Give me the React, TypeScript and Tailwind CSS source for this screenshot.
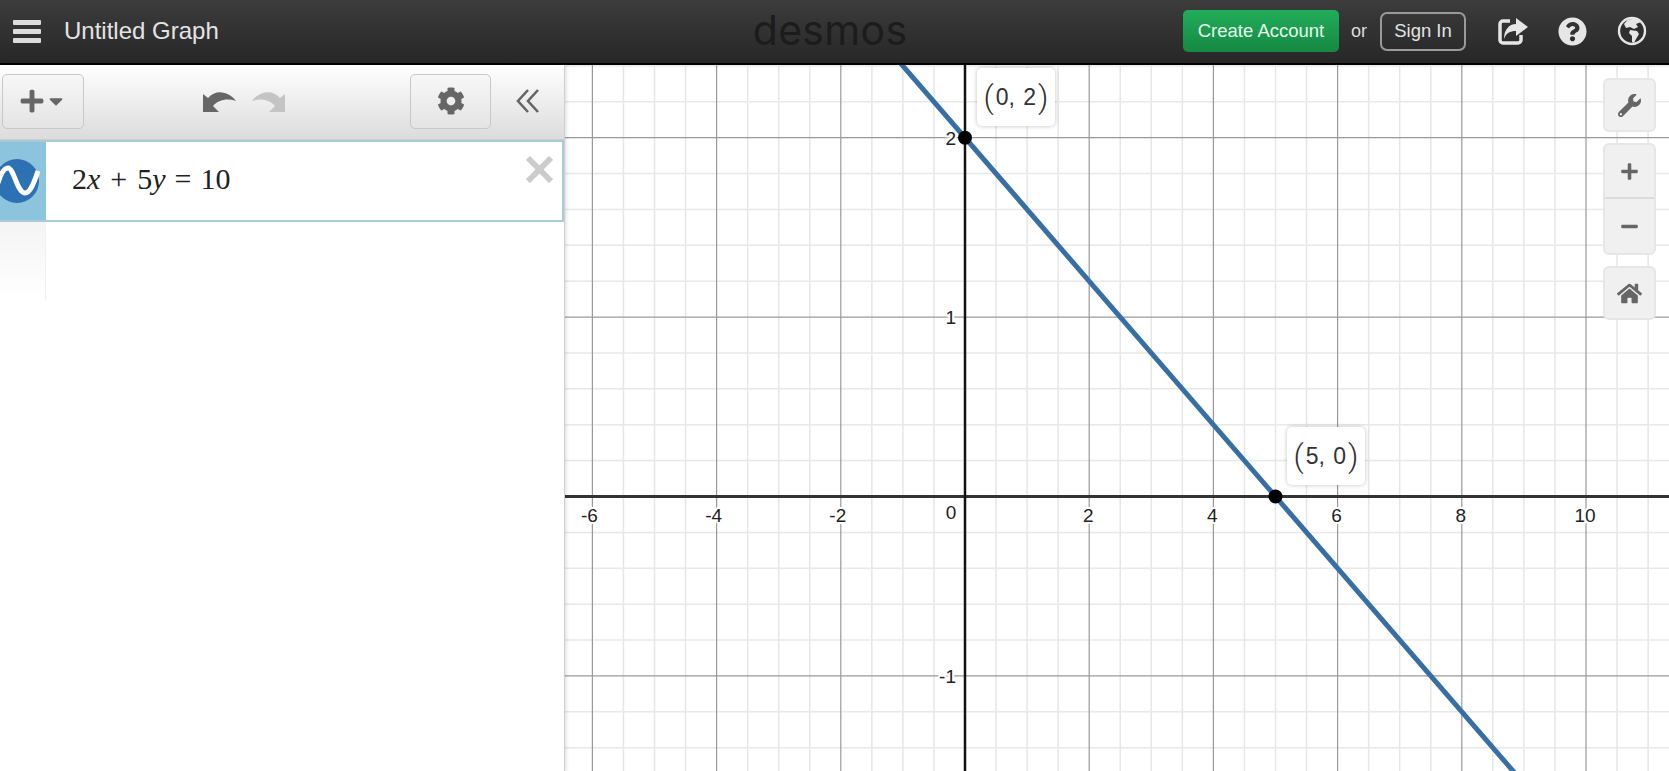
import { FaCaretDown, FaCog, FaHome, FaMinus, FaPlus, FaQuestionCircle, FaWrench } from 'react-icons/fa';

const sans = "font-['Liberation_Sans',Arial,sans-serif]";

// page coordinates of the graph origin and the size of one unit
const originX = 965;
const originY = 496.5;
const unitX = 62.1;
const unitY = 179.4;

const range = (from: number, to: number) => Array.from({ length: to - from + 1 }, (_, i) => from + i);

const toX = (v: number) => originX + v * unitX;
const toY = (v: number) => originY - v * unitY;

const xLabels = [-6, -4, -2, 2, 4, 6, 8, 10];

function Graph() {
    return (
        <svg className="absolute inset-0 h-full w-full" viewBox="565 65 1104 706" preserveAspectRatio="xMinYMin slice">
            {/* minor grid */}
            {range(-13, 25).filter(i => i % 4 !== 0).map(i => (
                <line key={i} x1={toX(i * 0.5)} x2={toX(i * 0.5)} y1={65} y2={771} stroke="#e6e6e6" strokeWidth={1.5} />
            ))}
            {range(-8, 12).filter(i => i % 5 !== 0).map(i => (
                <line key={i} x1={565} x2={1669} y1={toY(i * 0.2)} y2={toY(i * 0.2)} stroke="#e8e8e8" strokeWidth={1.5} />
            ))}
            {/* major grid */}
            {range(-3, 6).filter(i => i !== 0).map(i => (
                <line key={i} x1={toX(i * 2)} x2={toX(i * 2)} y1={65} y2={771} stroke="#999" strokeWidth={1.2} />
            ))}
            {[-1, 1, 2].map(i => (
                <line key={i} x1={565} x2={1669} y1={toY(i)} y2={toY(i)} stroke="#999" strokeWidth={1.2} />
            ))}
            {/* axes */}
            <line x1={565} x2={1669} y1={originY} y2={originY} stroke="#333" strokeWidth={3} />
            <line x1={originX} x2={originX} y1={65} y2={771} stroke="#111" strokeWidth={2.5} />
            {/* tick labels */}
            <g fontFamily="'Liberation Sans', Arial, sans-serif" fontSize={19} fill="#222" stroke="#fff" strokeWidth={4} paintOrder="stroke" strokeLinejoin="round">
                {xLabels.map(v => (
                    <text key={v} x={toX(v) - (v < 0 ? 3 : 1)} y={522} textAnchor="middle">{v}</text>
                ))}
                <text x={951} y={519} textAnchor="middle">0</text>
                <text x={956} y={145} textAnchor="end">2</text>
                <text x={956} y={324} textAnchor="end">1</text>
                <text x={956} y={683} textAnchor="end">-1</text>
            </g>
            {/* 2x + 5y = 10 */}
            <line x1={toX(-1.925)} y1={toY(2.77)} x2={toX(9)} y2={toY(-1.6)} stroke="#376fa5" strokeWidth={5} />
            <circle cx={toX(0)} cy={toY(2)} r={7} fill="#000" />
            <circle cx={toX(5)} cy={toY(0)} r={7} fill="#000" />
        </svg>
    );
}

function PointLabel({ text, className }: { text: string; className: string }) {
    return (
        <div className={`absolute flex h-[58px] w-[78px] items-center justify-center rounded-[5px] bg-white text-[#333] shadow-[0_0_4px_rgba(0,0,0,0.25)] ${className}`}>
            <span className="font-['Roboto',sans-serif] text-[32px] font-light leading-none">(</span>
            <span className={`mx-[2px] text-[23px] leading-none [word-spacing:2px] ${sans}`}>{text}</span>
            <span className="font-['Roboto',sans-serif] text-[32px] font-light leading-none">)</span>
        </div>
    );
}

function ToolButton({ children, className = '' }: { children: React.ReactNode; className?: string }) {
    return <div className={`flex items-center justify-center text-[#666] ${className}`}>{children}</div>;
}

function ShareIcon() {
    return (
        <svg width="32" height="30" viewBox="0 0 32 30" className="text-[#e6e6e6]">
            <path d="M13 5 H6 a3 3 0 0 0 -3 3 V24 a3 3 0 0 0 3 3 H21 a3 3 0 0 0 3 -3 V19" fill="none" stroke="currentColor" strokeWidth="3.5" />
            <path d="M19 2 L31 11 L19 20 V15 C13 15 9 17 7 23 C7 14 12 8 19 8 Z" fill="currentColor" />
        </svg>
    );
}

function Globe() {
    return (
        <svg width="30" height="30" viewBox="0 0 30 30">
            <circle cx="15" cy="15" r="13" fill="#2f2f2f" stroke="#e6e6e6" strokeWidth="2.4" />
            <path d="M11 3.5 L20 2.5 L24 6 L19 8 L21 11 L17 13 L13 11 L9 12 L7 8 Z" fill="#e6e6e6" />
            <path d="M13 14 L20 15 L22 18 L19 23 L17 27 L15 26 L15 20 L12 17 Z" fill="#e6e6e6" />
        </svg>
    );
}

function UndoIcon({ className }: { className: string }) {
    return (
        <svg width="34" height="23" viewBox="0 0 34 23" className={className}>
            <path d="M1 4 L1 22 H17 L11 16 C16 10 25 8 34 11 C28 2 14 -2 6 8 Z" fill="currentColor" />
        </svg>
    );
}

export default function App() {
    return (
        <div className={`flex h-screen w-full flex-col overflow-hidden bg-white ${sans}`}>
            {/* Header */}
            <header className="flex h-[65px] shrink-0 items-center border-b-2 border-black bg-gradient-to-b from-[#3c3c3c] to-[#272727] pb-[1px] pl-[13px] pr-[22px]">
                <div className="flex w-[28px] flex-col gap-[4px]">
                    <div className="h-[5px] rounded-[1px] bg-[#dcdcdc]" />
                    <div className="h-[5px] rounded-[1px] bg-[#dcdcdc]" />
                    <div className="h-[5px] rounded-[1px] bg-[#dcdcdc]" />
                </div>
                <span className="ml-[23px] text-[24px] text-[#e4e4e4]">Untitled Graph</span>
                <span className="mb-[2px] ml-[534px] font-['Inter',sans-serif] text-[41px] font-normal leading-none tracking-[0.3px] text-[#1c1c1c]">desmos</span>
                <div className="ml-auto flex items-center">
                    <button className="flex h-[42px] w-[156px] items-center justify-center rounded-[5px] bg-gradient-to-b from-[#21ae5a] to-[#168843] text-[18.5px] text-[#e6fbec]">
                        Create Account
                    </button>
                    <span className="ml-3 text-[18px] text-[#ddd]">or</span>
                    <button className="ml-[13px] flex h-[39px] w-[86px] items-center justify-center rounded-[7px] border-2 border-[#9a9a9a] text-[18.5px] text-[#e4e4e4]">
                        Sign In
                    </button>
                    <div className="ml-[31px]"><ShareIcon /></div>
                    <FaQuestionCircle size={29} className="ml-[29px] text-[#e6e6e6]" />
                    <div className="ml-[30px]"><Globe /></div>
                </div>
            </header>

            <div className="flex min-h-0 flex-1">
                {/* Expression list */}
                <aside className="z-10 flex w-[565px] shrink-0 flex-col border-r border-[#cfcfcf] bg-white shadow-[1px_0_4px_rgba(0,0,0,0.15)]">
                    <div className="flex h-[75px] shrink-0 items-center border-b border-[#cdcdcd] bg-gradient-to-b from-white to-[#dcdcdc] pb-[2px] pl-[2px]">
                        <button className="flex h-[55px] w-[82px] items-center justify-center rounded-[5px] border border-[#c8c8c8] bg-gradient-to-b from-[#f7f7f7] to-[#e4e4e4] text-[#666]">
                            <FaPlus size={26} />
                            <FaCaretDown size={22} />
                        </button>
                        <UndoIcon className="ml-[118px] text-[#666]" />
                        <UndoIcon className="ml-[16px] -scale-x-100 text-[#c4c4c4]" />
                        <button className="ml-[124px] flex h-[55px] w-[81px] items-center justify-center rounded-[5px] border border-[#c8c8c8] bg-gradient-to-b from-[#f7f7f7] to-[#e4e4e4] text-[#666]">
                            <FaCog size={28} />
                        </button>
                        <svg width="23" height="24" viewBox="0 0 23 24" fill="none" stroke="#666" strokeWidth="2.6" className="ml-[25px]">
                            <path d="M12 1 L2 12 L12 23" />
                            <path d="M22 1 L12 12 L22 23" />
                        </svg>
                    </div>
                    {/* Expression row */}
                    <div className="flex h-[82px] shrink-0 border-2 border-l-0 border-[#a9cbd9]">
                        <div className="flex w-[46px] shrink-0 items-center overflow-hidden bg-[#8cc4de]">
                            <svg width="46" height="44" viewBox="0 0 46 44" className="shrink-0">
                                <circle cx="17" cy="22" r="22" fill="#2d70b3" />
                                <path d="M-2 24 C1 14 4 9 8 9 C14 9 17 34 25 34 C30 34 34 24 38 12" fill="none" stroke="#fff" strokeWidth="5" />
                            </svg>
                        </div>
                        <div className="flex flex-1 items-center justify-between pl-[26px] pr-[9px]">
                            <span className="mb-[4px] font-['Liberation_Serif',serif] text-[30px] leading-none text-[#222]">
                                2<i>x</i>
                                <span className="mx-[10px]">+</span>
                                5<i>y</i>
                                <span className="mx-[9px]">=</span>
                                10
                            </span>
                            <svg width="27" height="27" viewBox="0 0 28 28" stroke="#cbcbcb" strokeWidth="6" className="mb-[24px]">
                                <path d="M2 2 L26 26" />
                                <path d="M26 2 L2 26" />
                            </svg>
                        </div>
                    </div>
                    <div className="h-[78px] w-[46px] border-r border-[#f0f0f0] bg-gradient-to-b from-[#f4f4f4] to-white" />
                </aside>

                {/* Graph paper */}
                <main className="relative min-w-0 flex-1 overflow-hidden">
                    <Graph />
                    <PointLabel text="0, 2" className="left-[412px] top-[3px]" />
                    <PointLabel text="5, 0" className="left-[722px] top-[362px]" />
                    <div className="absolute right-[13px] top-[13px] flex w-[53px] flex-col gap-[11px]">
                        <ToolButton className="h-[54px] rounded-[6px] border-2 border-[#e6e6e6] bg-[#f0f0f0]">
                            <FaWrench size={23} />
                        </ToolButton>
                        <div className="flex flex-col rounded-[6px] border-2 border-[#e6e6e6] bg-[#f0f0f0]">
                            <ToolButton className="h-[54px] border-b-2 border-[#dcdcdc]"><FaPlus size={19} /></ToolButton>
                            <ToolButton className="h-[54px]"><FaMinus size={19} /></ToolButton>
                        </div>
                        <ToolButton className="h-[54px] rounded-[6px] border-2 border-[#e6e6e6] bg-[#f0f0f0]">
                            <FaHome size={25} />
                        </ToolButton>
                    </div>
                </main>
            </div>
        </div>
    );
}
